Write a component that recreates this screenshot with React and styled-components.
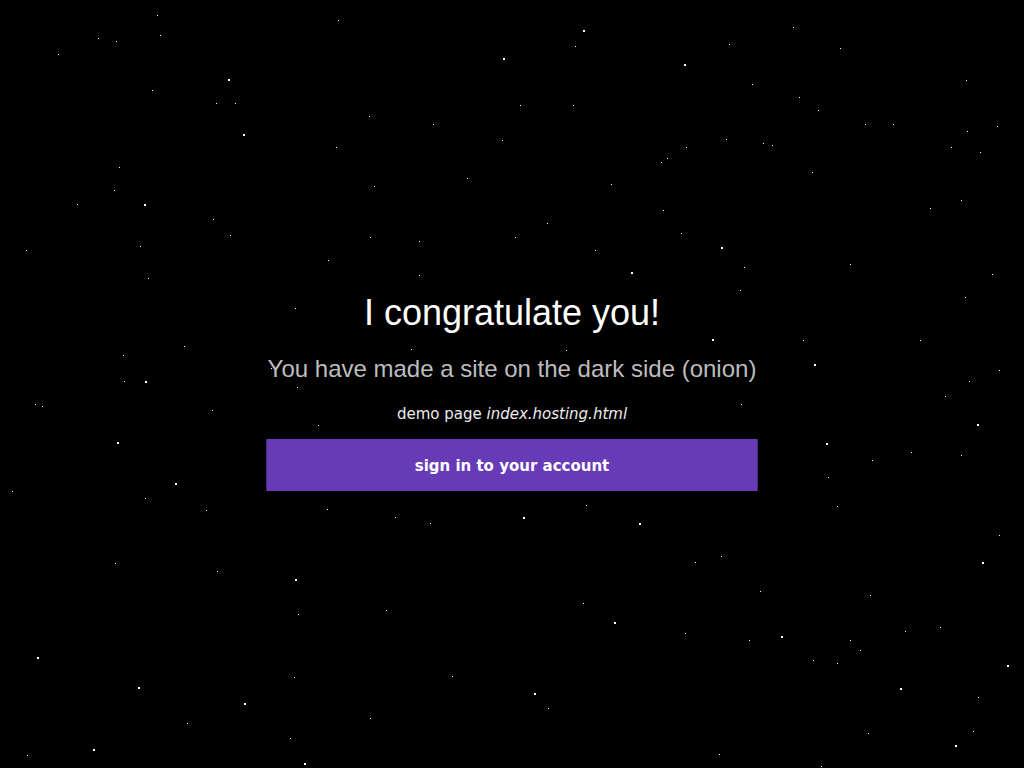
import React from 'react';
import styled, { createGlobalStyle } from 'styled-components';

const GlobalStyle = createGlobalStyle`
  html, body {
    margin: 0;
    padding: 0;
    background: #000;
  }
`;

const Page = styled.div`
  position: relative;
  width: 100%;
  height: 100vh;
  overflow: hidden;
  background: #000;
  display: flex;
  justify-content: center;
  padding-top: 293px;
  box-sizing: border-box;
`;

const StarField = styled.div`
  position: absolute;
  inset: 0;
  pointer-events: none;
`;

const Star = styled.span`
  position: absolute;
  width: ${({ big }) => (big ? '2px' : '1px')};
  height: ${({ big }) => (big ? '2px' : '1px')};
  background: #fff;
`;

const Content = styled.div`
  position: relative;
  width: 492px;
  display: flex;
  flex-direction: column;
  align-items: center;
  text-align: center;
`;

const Title = styled.h1`
  margin: 0;
  font-family: "Liberation Sans", Arial, sans-serif;
  font-weight: normal;
  font-size: 36px;
  line-height: 40px;
  color: #fff;
`;

const Subtitle = styled.h2`
  margin: 22px 0 0;
  font-family: "Liberation Sans", Arial, sans-serif;
  font-weight: normal;
  font-size: 24px;
  line-height: 28px;
  color: #bdbdbd;
  white-space: nowrap;
`;

const Note = styled.p`
  margin: 22px 0 0;
  font-family: "DejaVu Sans", Verdana, sans-serif;
  font-size: 15px;
  line-height: 18px;
  color: #ececec;

  em {
    font-style: italic;
  }
`;

const SignInButton = styled.button`
  margin-top: 16px;
  width: 100%;
  height: 52px;
  background: #673ab7;
  border: none;
  border-left: 1px solid #45297a;
  border-right: 1px solid #45297a;
  color: #fff;
  font-family: "DejaVu Sans", Verdana, sans-serif;
  font-weight: bold;
  font-size: 15px;
  cursor: pointer;
  padding: 2px 0 0;
`;

// x, y, big
const stars = [
  [157, 15], [338, 20], [583, 30, 1], [793, 27], [98, 38], [116, 41], [160, 35],
  [575, 46], [503, 58, 1], [684, 64, 1], [729, 44], [58, 54], [840, 48], [228, 79, 1],
  [752, 84], [966, 80], [152, 90], [216, 103], [235, 103], [369, 116], [520, 105],
  [573, 105], [799, 97], [818, 110], [997, 126], [433, 124], [243, 134, 1], [502, 140],
  [686, 147], [726, 139], [763, 143], [772, 145], [893, 124], [865, 124], [967, 131],
  [336, 147], [951, 147], [980, 152], [119, 167], [661, 162], [667, 158], [467, 178],
  [374, 186], [611, 184], [812, 172], [144, 204, 1], [114, 190], [77, 204], [663, 210],
  [930, 208], [961, 200], [213, 219], [547, 223], [681, 233], [721, 247, 1], [370, 237],
  [419, 241], [515, 237], [140, 246], [26, 250], [230, 235], [595, 250], [328, 260],
  [631, 272, 1], [850, 264], [744, 267], [419, 275], [992, 274], [148, 278], [740, 290],
  [965, 297], [295, 308], [184, 346], [712, 339, 1], [803, 340], [920, 340], [411, 349],
  [566, 350], [123, 355], [814, 364, 1], [271, 368], [999, 370], [145, 381, 1], [124, 381],
  [969, 381], [297, 387], [945, 396], [35, 404], [42, 406], [212, 410], [741, 404],
  [977, 424, 1], [318, 425], [117, 442, 1], [826, 443, 1], [961, 455], [911, 452],
  [872, 460], [12, 491], [175, 483, 1], [828, 477], [145, 498], [206, 510], [327, 509],
  [395, 517], [430, 523], [523, 517, 1], [639, 523, 1], [586, 505], [837, 506], [999, 535],
  [115, 563], [217, 571], [695, 562], [721, 556], [982, 562, 1], [295, 579, 1], [760, 591],
  [870, 595], [583, 603], [298, 614], [386, 610], [614, 622, 1], [940, 627], [905, 631],
  [781, 636, 1], [685, 633], [749, 640], [37, 657, 1], [850, 640], [860, 650],
  [1007, 665, 1], [813, 660], [837, 663], [294, 677], [452, 676], [138, 687, 1],
  [534, 693, 1], [900, 688, 1], [978, 697], [244, 703, 1], [548, 708], [370, 718],
  [187, 723], [93, 749, 1], [27, 755], [290, 738], [955, 745, 1], [973, 731],
  [304, 763, 1], [821, 766], [719, 754], [868, 733],
];

function App() {
  return (
    <>
      <GlobalStyle />
      <Page>
        <StarField>
          {stars.map(([x, y, big], i) => (
            <Star key={i} big={big ? 1 : 0} style={{ left: x, top: y }} />
          ))}
        </StarField>
        <Content>
          <Title>I congratulate you!</Title>
          <Subtitle>You have made a site on the dark side (onion)</Subtitle>
          <Note>
            demo page <em>index.hosting.html</em>
          </Note>
          <SignInButton>sign in to your account</SignInButton>
        </Content>
      </Page>
    </>
  );
}

export default App;
